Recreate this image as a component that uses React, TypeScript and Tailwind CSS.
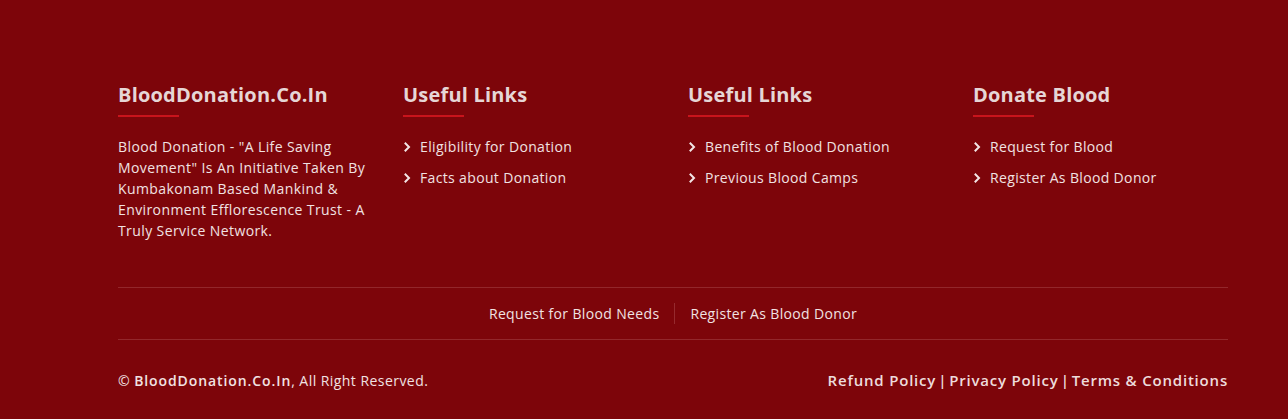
import React from "react";

const font = { fontFamily: '"Open Sans", "Liberation Sans", sans-serif' };

function Chevron() {
  return (
    <svg width="7" height="10" viewBox="0 0 7 10" className="shrink-0">
      <path d="M1.5 1.5 L5 5 L1.5 8.5" fill="none" stroke="#f3e6e6" strokeWidth="2" strokeLinecap="square" />
    </svg>
  );
}

function Heading({ children }: { children: React.ReactNode }) {
  return (
    <div>
      <h3 className="text-[20px] leading-[30px] font-bold text-[#e6d6d6] tracking-[0.2px]">{children}</h3>
      <div className="mt-[5px] h-[2px] w-[61px] bg-[#c8141c]" />
    </div>
  );
}

function LinkList({ items }: { items: string[] }) {
  return (
    <ul className="mt-[19px] flex flex-col gap-[10px]">
      {items.map((t) => (
        <li key={t} className="flex items-center gap-[9px] pl-[1px] text-[14px] leading-[21px] tracking-[0.35px] text-[#f1e2e2]">
          <Chevron />
          <span>{t}</span>
        </li>
      ))}
    </ul>
  );
}

export default function App() {
  return (
    <div className="h-[419px] w-full bg-[#7d050a]" style={font}>
      <div className="pl-[118px] pt-[80px]">
        <div className="grid w-[1140px] grid-cols-4">
          <div className="pr-[30px]">
            <Heading>BloodDonation.Co.In</Heading>
            <p className="mt-[19px] text-[14px] leading-[21px] tracking-[0.4px] text-[#f1e2e2]">
              Blood Donation - "A Life Saving Movement" Is An Initiative Taken By Kumbakonam Based Mankind &amp; Environment Efflorescence Trust - A Truly Service Network.
            </p>
          </div>
          <div className="pr-[30px]">
            <Heading>Useful Links</Heading>
            <LinkList items={["Eligibility for Donation", "Facts about Donation"]} />
          </div>
          <div className="pr-[30px]">
            <Heading>Useful Links</Heading>
            <LinkList items={["Benefits of Blood Donation", "Previous Blood Camps"]} />
          </div>
          <div className="pr-[30px]">
            <Heading>Donate Blood</Heading>
            <LinkList items={["Request for Blood", "Register As Blood Donor"]} />
          </div>
        </div>

        <div className="mt-[46px] w-[1110px]">
          <div className="flex h-[53px] items-center justify-center border-y border-[#93272b] text-[14px] leading-[21px] tracking-[0.35px] text-[#f1e2e2]">
            <span className="pr-[15px]">Request for Blood Needs</span>
            <span className="h-[21px] w-px bg-[#962a2e]" />
            <span className="pl-[15px]">Register As Blood Donor</span>
          </div>
          <div className="flex items-center justify-between pt-[30px] text-[14px] leading-[21px] tracking-[0.45px] text-[#f1e2e2]">
            <span>
              © <span className="font-semibold tracking-[0.9px]">BloodDonation.Co.In</span>, All Right Reserved.
            </span>
            <span className="text-[15px] font-semibold tracking-[0.8px] text-[#eddcdc]">
              Refund Policy<span className="mx-[2px]">|</span>Privacy Policy<span className="mx-[2px]">|</span>Terms &amp; Conditions
            </span>
          </div>
        </div>
      </div>
    </div>
  );
}
